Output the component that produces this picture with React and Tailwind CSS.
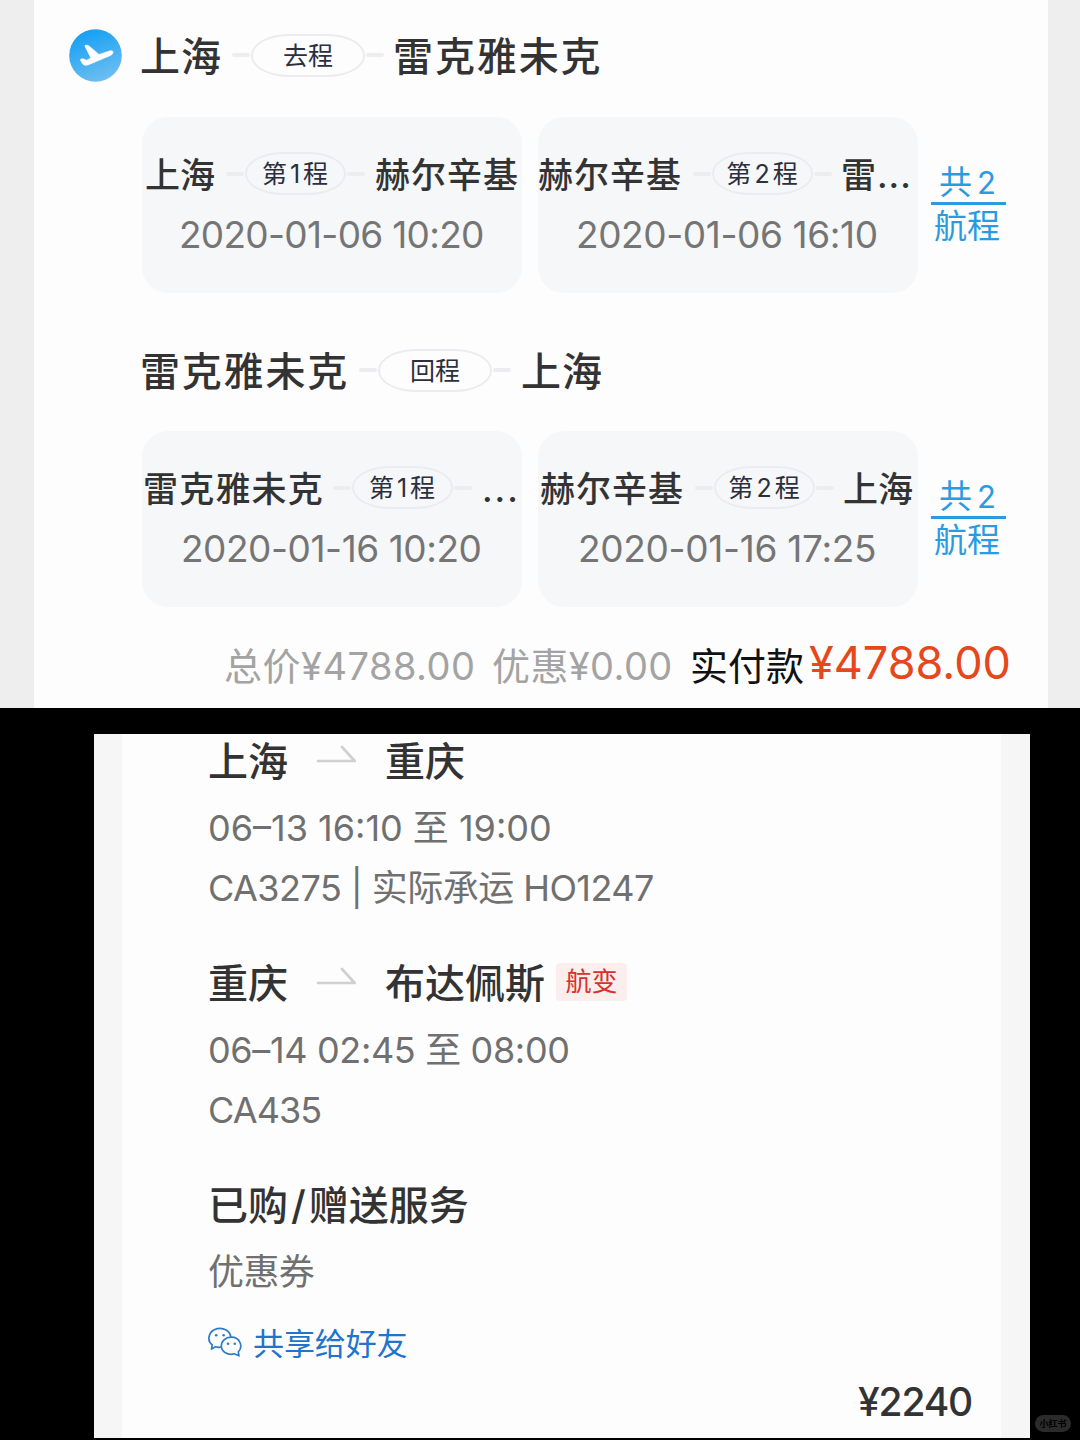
const Dash = ({ className = "" }) => (
  <span className={`h-[4px] shrink-0 rounded-full bg-[#ededef] ${className}`} />
);

const Pill = ({ children, className = "" }) => (
  <span
    className={`flex h-[43px] shrink-0 items-center justify-center whitespace-nowrap rounded-[38px/21px] border-2 border-[#ebecef] pt-[2px] text-[#2c2f3c] ${className}`}
  >
    {children}
  </span>
);

const City = ({ children, className = "" }) => (
  <span className={`block shrink-0 whitespace-nowrap font-medium text-[#333] ${className}`}>
    {children}
  </span>
);

const PlaneIcon = () => (
  <svg viewBox="0 0 53 53" className="h-[53px] w-[53px] shrink-0">
    <defs>
      <linearGradient id="sky" x1="0.3" y1="0" x2="0.7" y2="1">
        <stop offset="0" stopColor="#129ff4" />
        <stop offset="1" stopColor="#72bff0" />
      </linearGradient>
    </defs>
    <circle cx="26.5" cy="26.5" r="26.3" fill="url(#sky)" />
    <path
      d="M15.8 17 Q15.8 16 17 16.1 L19.2 16.4 Q20.2 16.8 21 17.8 L30 25.4 L41 21.8 Q44.3 21.2 44.2 23.5 Q43.8 25.6 41 26.8 L19 36 Q15.6 37.4 13.4 34.8 L11.4 30.9 Q11.2 30 12.2 29.9 L14.2 29.8 L17.6 31.2 L21.8 29 Z"
      fill="#fff"
      stroke="#fff"
      strokeWidth="0.5"
      strokeLinejoin="round"
    />
  </svg>
);

const Segment = ({ from, to, leg, date, row, dateClass, fromClass, toClass }) => (
  <div className="flex h-[176px] w-[380px] shrink-0 flex-col rounded-[26px] bg-[#f5f7f9] pt-[35px]">
    <div className={`flex h-[43px] items-center ${row}`}>
      <City className={`pt-[3px] text-[35px] ${fromClass}`}>{from}</City>
      <Dash className="w-[18px]" />
      <Pill className="mx-px w-[101px] text-[25px] tracking-[1px]">
        第<span className="mx-[2px]">{leg}</span>程
      </Pill>
      <Dash className="w-[18px]" />
      <City className={`pt-[3px] text-[35px] ${toClass}`}>{to}</City>
    </div>
    <div className={`mt-[17px] flex h-[44px] items-center whitespace-nowrap text-[37px] text-[#757575] ${dateClass}`}>
      {date}
    </div>
  </div>
);

const Count = () => (
  <div className="ml-[13px] mt-[44px] flex w-[75px] flex-col items-center text-[33px] text-[#2a9be2]">
    <div className="flex h-[44px] w-full items-center justify-center gap-[5px] border-b-[3px] border-[#2a9be2] pr-[2px] pt-[2px]">
      <span>共</span>
      <span className="text-[31px]">2</span>
    </div>
    <div className="flex h-[42px] items-center whitespace-nowrap pr-[3px]">航程</div>
  </div>
);

const Arrow = () => (
  <svg viewBox="0 0 40 22" className="mb-[14px] ml-[28px] mr-[29px] h-[22px] w-[40px] shrink-0">
    <path d="M2 18 H38.7 L26 4" fill="none" stroke="#d0d0d0" strokeWidth="2.7" strokeLinecap="round" strokeLinejoin="round" />
  </svg>
);

const WechatIcon = () => (
  <svg viewBox="0 0 34 30" className="mb-[2px] h-[30px] w-[34px] shrink-0" fill="none" stroke="#2f7dca" strokeWidth="1.7" strokeLinejoin="round">
    <path d="M13.2 20.2 Q10 20.6 7.5 19.8 L3.5 22 L4.3 18 C-1.5 13.5 .3 3.8 9.2 1.6 C15.8 .2 22 4 22.8 10" />
    <path d="M23.3 10.2 C17.5 10.2 13.3 14.1 13.3 18.8 C13.3 24.8 19.8 28.6 26.3 26.8 L31 28.8 L30.3 24.8 C35.5 19.5 32 10.2 23.3 10.2 Z" />
    <g fill="#2f7dca" stroke="none">
      <circle cx="8.2" cy="8.2" r="1.3" />
      <circle cx="15.6" cy="8.2" r="1.3" />
      <circle cx="20" cy="16.8" r="1.3" />
      <circle cx="26.8" cy="16.8" r="1.3" />
    </g>
  </svg>
);

const Detail = ({ children, className = "" }) => (
  <div className={`flex h-[60px] items-center whitespace-pre text-[36px] text-[#707070] ${className}`}>{children}</div>
);

export default function App() {
  return (
    <div
      lang="zh-CN"
      className="h-[1440px] w-[1080px] overflow-hidden bg-black font-[Inter,'Noto_Sans_CJK_SC',sans-serif] leading-none"
    >
      <section className="h-[708px] bg-[#eee] pl-[34px] pr-[32px]">
        <div className="flex h-full flex-col bg-[#fdfdfd]">
          <div className="flex h-[117px] items-center pb-[7px] pl-[35px]">
            <PlaneIcon />
            <City className="ml-[18px] w-[92px] pt-[3px] text-[40px] tracking-[1px]">上海</City>
            <Dash className="w-[18px]" />
            <Pill className="mx-px w-[114px] text-[25px]">去程</Pill>
            <Dash className="w-[18px]" />
            <City className="ml-[9px] pt-[3px] text-[40px] tracking-[1.9px]">雷克雅未克</City>
          </div>
          <div className="flex h-[176px] pl-[108px]">
            <Segment from="上海" to="赫尔辛基" leg="1" date="2020-01-06 10:20" row="pl-[3px]" fromClass="w-[81px]" toClass="ml-[10px] tracking-[1px]" dateClass="pl-[37px] tracking-[-0.7px]" />
            <div className="w-[16px]" />
            <Segment from="赫尔辛基" to="雷..." leg="2" date="2020-01-06 16:10" row="pl-0" fromClass="w-[155px] tracking-[1px]" toClass="ml-[9px] tracking-[1px]" dateClass="pl-[38px] tracking-[-0.4px]" />
            <Count />
          </div>
          <div className="flex h-[138px] items-center pl-[106px] pt-[16px]">
            <City className="w-[219px] pt-[3px] text-[40px] tracking-[1.8px]">雷克雅未克</City>
            <Dash className="w-[18px]" />
            <Pill className="mx-px w-[114px] text-[25px]">回程</Pill>
            <Dash className="w-[18px]" />
            <City className="ml-[10px] pt-[3px] text-[40px] tracking-[1px]">上海</City>
          </div>
          <div className="flex h-[176px] pl-[108px]">
            <Segment from="雷克雅未克" to="..." leg="1" date="2020-01-16 10:20" row="pl-0" fromClass="w-[191px] pl-px tracking-[1.2px]" toClass="ml-[10px] tracking-[2px]" dateClass="pl-[39px] tracking-[-0.45px]" />
            <div className="w-[16px]" />
            <Segment from="赫尔辛基" to="上海" leg="2" date="2020-01-16 17:25" row="pl-[2px]" fromClass="w-[155px] tracking-[1px]" toClass="ml-[9px]" dateClass="pl-[40px] tracking-[-0.3px]" />
            <Count />
          </div>
          <div className="flex h-[101px] items-center whitespace-nowrap pl-[190px] pt-[16px] text-[38px] text-[#a3a3a3]">
            <span className="w-[268px] shrink-0 tracking-[0.5px]">总价¥4788.00</span>
            <span className="w-[198px] shrink-0 tracking-[0.4px]">优惠¥0.00</span>
            <span className="w-[119px] shrink-0 text-[#111]">实付款</span>
            <span className="mb-[7px] text-[45px] text-[#e5481b]">¥4788.00</span>
          </div>
        </div>
      </section>

      <section className="ml-[94px] mt-[26px] h-[704px] w-[936px] bg-[#f6f6f6] pl-[28px] pr-[29px]">
        <div className="flex h-full flex-col bg-[#fdfdfd] pl-[86px]">
          <div className="flex h-[54px] items-center">
            <City className="pt-px text-[40px]">上海</City>
            <Arrow />
            <City className="pt-px text-[40px]">重庆</City>
          </div>
          <div className="mt-[10px]">
            <Detail>06–13 16:10 至 19:00</Detail>
            <Detail className="tracking-[-0.55px]">CA3275 | 实际承运 HO1247</Detail>
          </div>
          <div className="mt-[38px] flex h-[54px] items-center">
            <City className="pt-px text-[40px]">重庆</City>
            <Arrow />
            <City className="pt-px text-[40px]">布达佩斯</City>
            <span className="mb-[2px] ml-[11px] flex h-[38px] w-[71px] items-center justify-center whitespace-nowrap rounded-[4px] bg-[#fceeed] text-[26px] text-[#d9302b]">
              航变
            </span>
          </div>
          <div className="mt-[10px]">
            <Detail className="tracking-[-0.35px]">06–14 02:45 至 08:00</Detail>
            <Detail className="tracking-[-0.9px]">CA435</Detail>
          </div>
          <div className="mt-[38px] flex h-[54px] items-center">
            <City className="pt-px text-[40px]">已购<span className="mx-[3px]">/</span>赠送服务</City>
          </div>
          <Detail className="mt-[10px] tracking-[-0.6px]">优惠券</Detail>
          <div className="mt-[14px] flex h-[54px] items-center text-[31px] text-[#2173cc]">
            <WechatIcon />
            <span className="ml-[11px] whitespace-nowrap tracking-[-0.1px]">共享给好友</span>
          </div>
          <div className="mt-[8px] flex h-[48px] items-center justify-end pb-px pr-[29px] text-[39px] font-medium tracking-[-1.2px] text-[#333]">
            ¥2240
          </div>
        </div>
      </section>
      <div className="absolute left-[1035px] top-[1415px] flex h-[17px] w-[36px] items-center justify-center whitespace-nowrap rounded-full bg-[#2b2b2b] text-[9px] font-bold text-black">
        小红书
      </div>
    </div>
  );
}
